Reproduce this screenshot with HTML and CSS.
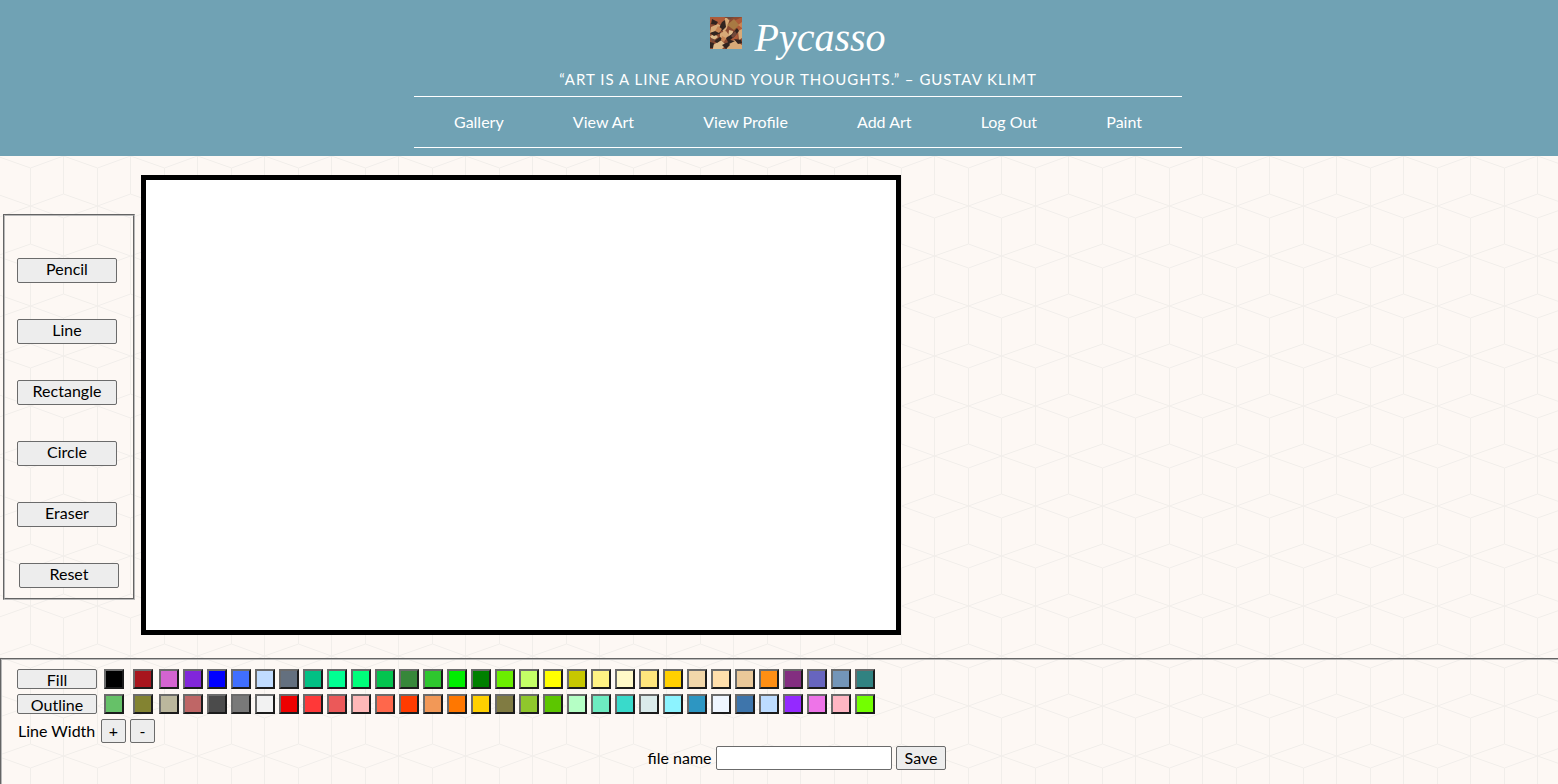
FILE: index.html
```
<!DOCTYPE html>
<html lang="en">
<head>
<meta charset="utf-8">
<title>Pycasso</title>
<link rel="stylesheet" href="styles.css">
</head>
<body>
<header class="site-header">
  <div class="brand">
    <svg class="logo" viewBox="0 0 32 32" aria-hidden="true">
      <rect width="32" height="32" fill="#8b4a31"/>
      <path fill="#ad5b39" d="M0 0h15l-2 6-6 3-7-3zM24 4l8-4v15l-6-4zM20 17l7-4 1 8-6 5z"/>
      <path fill="#d8aa78" d="M1 10l7-3 5 3-5 4-8 2zM15 1l5 0-3 10-3 5-2-3zM10 16l6-2 3 4-4 5-5-2zM16 26l8-3 8 5v4H17zM28 14l4-2v9l-3 2z"/>
      <path fill="#a87a43" d="M24 2l5 6-5 5-7-5z"/>
      <path fill="#dfbb8b" d="M0 19l5-2 3 3-5 4zM3 28l8-5 5 5-4 4H3zM19 13l4 1-1 6-4 2z"/>
      <path fill="#31231f" d="M2 2l6 3-2 3-5-1zM12 5l3-2 1 7-4 4-3-3zM0 16l8-3 3 3-7 3zM4 24l6-4 3 2-6 4zM16 21l6-4 5-6 2 3-5 6-4 3 5 1-6 3zM0 25l4 1-1 5H0zM24 22l7 1 1 3-4 1zM12 28l6-3 2 3-4 4z"/>
      <path fill="#c78555" d="M8 9l4 3-3 4-4-2zM28 8l4-3v6zM12 19l4 2-2 4-3-2z"/>
      <path fill="#71483a" d="M25 14l2 3-4 4-2-2zM1 21l5 2-4 2zM16 0l8 0-5 3z"/>
    </svg>
    <h1 class="title">Pycasso</h1>
  </div>
  <p class="quote">“Art is a line around your thoughts.” – Gustav Klimt</p>
  <nav class="nav">
    <a href="#">Gallery</a>
    <a href="#">View Art</a>
    <a href="#">View Profile</a>
    <a href="#">Add Art</a>
    <a href="#">Log Out</a>
    <a href="#">Paint</a>
  </nav>
</header>
<main class="studio">
  <div class="workspace">
    <div class="tools">
      <button type="button" class="btn tool">Pencil</button>
      <button type="button" class="btn tool">Line</button>
      <button type="button" class="btn tool">Rectangle</button>
      <button type="button" class="btn tool">Circle</button>
      <button type="button" class="btn tool">Eraser</button>
      <button type="button" class="btn tool tool-reset">Reset</button>
    </div>
    <canvas class="board" width="750" height="450"></canvas>
  </div>
  <section class="options">
    <div class="palette">
      <button type="button" class="btn mode">Fill</button>
      <div class="swatches" id="fill"></div>
    </div>
    <div class="palette">
      <button type="button" class="btn mode">Outline</button>
      <div class="swatches" id="outline"></div>
    </div>
    <div class="line-width">
      <span>Line Width</span>
      <button type="button" class="btn step" aria-label="Increase line width">+</button>
      <button type="button" class="btn step" aria-label="Decrease line width">-</button>
    </div>
    <form class="save">
      <label for="filename">file name</label>
      <input id="filename" class="filename" type="text">
      <button type="button" class="btn save-btn">Save</button>
    </form>
  </section>
</main>
<script src="palette.js"></script>
</body>
</html>
```
FILE: styles.css
```
* {
  box-sizing: border-box;
}

body {
  margin: 0;
  min-height: 100vh;
  display: flex;
  flex-direction: column;
  font: 16px/22px Lato, "Open Sans", sans-serif;
  color: #000;
  background: #fdf8f4 url("data:image/svg+xml,%3Csvg xmlns='http://www.w3.org/2000/svg' width='67' height='100'%3E%3Cpath fill='none' stroke='%23f1eeea' d='M63.5 0V-6M63.5 18V94M30.5-32V44M30.5 68V144M-3.5-6L30.5 6L63.5-6L97.5 6M-3.5 18L30.5 6L63.5 18L97.5 6M-3.5 56L30.5 44L63.5 56L97.5 44M-3.5 56L30.5 68L63.5 56L97.5 68M-3.5 94L30.5 106L63.5 94L97.5 106'/%3E%3C/svg%3E");
}

.site-header {
  display: flex;
  flex-direction: column;
  align-items: center;
  padding: 12px 0 8px 38px;
  color: #fff;
  background: #70a2b4;
}

.brand {
  display: flex;
  align-items: flex-start;
  gap: 12px;
}

.logo {
  width: 32px;
  height: 32px;
  margin-top: 5px;
}

.title {
  margin: 0;
  font: italic 500 40px/52px "Liberation Serif", serif;
}

.quote {
  margin: 4px 0 6px;
  font-size: 15px;
  letter-spacing: 1px;
  text-transform: uppercase;
}

.nav {
  display: flex;
  justify-content: space-between;
  width: 768px;
  max-width: 100%;
  padding: 14px 40px;
  border-top: 1px solid #fff;
  border-bottom: 1px solid #fff;
}

.nav a {
  color: #fff;
  text-decoration: none;
}

.studio {
  flex: 1;
  display: flex;
  flex-direction: column;
}

.workspace {
  display: flex;
  align-items: center;
  gap: 6px;
  padding: 19px 3px 23px;
}

.tools {
  display: flex;
  flex-direction: column;
  gap: 36px;
  width: 132px;
  margin-top: 4px;
  padding: 42px 12px 10px;
  border: 2px groove #b8b8b8;
}

.btn {
  padding: 0;
  font: inherit;
  line-height: 20px;
  color: #000;
  background: #ededed;
  border: 1px solid #6b6b6b;
  border-radius: 2px;
}

.tool {
  width: 100px;
  height: 25px;
  padding-bottom: 4px;
}

.tool-reset {
  margin-left: 2px;
}

.board {
  border: 5px solid #000;
  background: #fff;
}

.options {
  flex: 1;
  display: flex;
  flex-direction: column;
  gap: 5px;
  padding: 9px 15px 14px;
  border: 2px groove #b8b8b8;
  border-width: 2px 0 0 2px;
}

.palette {
  display: flex;
  gap: 7px;
}

.mode {
  width: 80px;
  height: 20px;
}

.swatches {
  display: flex;
  gap: 4px;
}

.swatch {
  width: 20px;
  height: 20px;
  padding: 0;
  border: 2px solid;
  border-color: #6b6b6b #1c1c1c #1c1c1c #6b6b6b;
}

.swatch:first-child {
  margin-right: 5px;
}

.swatch:nth-child(2) {
  margin-right: 2px;
}

.line-width {
  display: flex;
  align-items: center;
  gap: 4px;
}

.line-width span {
  width: 80px;
  padding-left: 1px;
}

.step {
  width: 25px;
  height: 24px;
}

.save {
  display: flex;
  justify-content: center;
  align-items: center;
  gap: 4px;
  padding-left: 34px;
  margin-top: -2px;
}

.filename {
  width: 176px;
  height: 24px;
  padding: 0 2px;
  font: inherit;
  background: #fff;
  border: 1px solid #6b6b6b;
  border-radius: 2px;
}

.save-btn {
  height: 24px;
  padding: 0 8px;
}
```
FILE: palette.js
```
const palettes = {
  fill: [
    "#000000", "#a8151d", "#d464d1", "#8126da", "#0000ff", "#406fff", "#c1dcff", "#64707f",
    "#02c084", "#00ff92", "#00ff7b", "#04c44f", "#37873a", "#2ec62e", "#00ee00", "#008000",
    "#6bee00", "#c4ff66", "#ffff00", "#c7c700", "#fff384", "#fff9c8", "#ffe67d", "#ffd000",
    "#f2d7aa", "#ffdfac", "#eac899", "#ff8f14", "#832e80", "#6765bf", "#7395b8", "#318281"
  ],
  outline: [
    "#66c168", "#838331", "#bbb79d", "#bf6666", "#4b4b4b", "#797979", "#f2f2f2", "#ed0000",
    "#ff3838", "#eb5959", "#ffb8b8", "#ff674b", "#ff3b00", "#f29857", "#ff7700", "#ffd000",
    "#807b42", "#8fc72c", "#5cc600", "#b5ffc5", "#6debc1", "#39dacb", "#daebeb", "#8cf3ff",
    "#2d96c2", "#eff6ff", "#3e75ab", "#bddcff", "#9429ff", "#ee74e8", "#ffb6c3", "#73ff00"
  ]
};

for (const [id, colors] of Object.entries(palettes)) {
  const row = document.getElementById(id);
  for (const color of colors) {
    const swatch = document.createElement("button");
    swatch.type = "button";
    swatch.className = "swatch";
    swatch.style.backgroundColor = color;
    swatch.setAttribute("aria-label", id + " " + color);
    row.append(swatch);
  }
}
```
